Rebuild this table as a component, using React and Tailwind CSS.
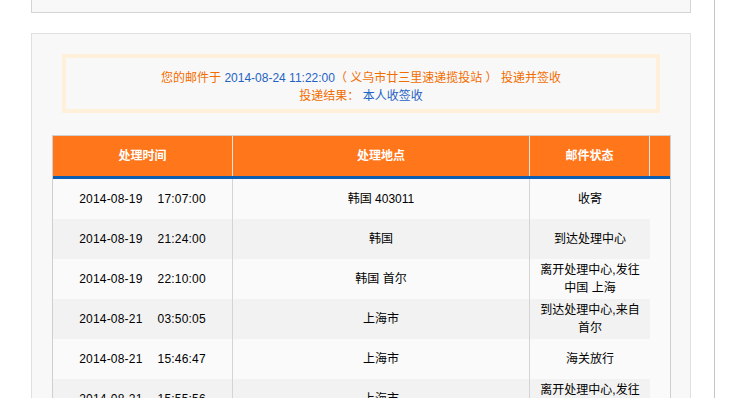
import React from "react";

const rows = [
  ["2014-08-19", "17:07:00", "韩国 403011", "收寄"],
  ["2014-08-19", "21:24:00", "韩国", "到达处理中心"],
  ["2014-08-19", "22:10:00", "韩国 首尔", "离开处理中心,发往中国 上海"],
  ["2014-08-21", "03:50:05", "上海市", "到达处理中心,来自首尔"],
  ["2014-08-21", "15:46:47", "上海市", "海关放行"],
  ["2014-08-21", "15:55:56", "上海市", "离开处理中心,发往义乌市"],
];

const font = { fontFamily: '"Liberation Sans", "Noto Sans CJK SC", sans-serif' };

export default function App() {
  return (
    <div className="w-[750px] h-[398px] overflow-hidden bg-white text-[12px]" style={font}>
      <div className="w-[715px] h-[398px] border-r border-[#c4c4c4]">
        <div className="ml-[31px] w-[660px] h-[13px] bg-[#f8f8f8] border-x border-b border-[#d4d4d4]" />
        <div className="ml-[31px] mt-[20px] w-[660px] h-[400px] bg-[#f8f8f8] border border-[#e0e0e0] pt-[20px]">
          <div className="mx-[30px] h-[59px] border-[4px] border-[#fff0d9] pt-[6px] flex flex-col items-center justify-center leading-[18px] text-[#f26d00]">
            <div>
              您的邮件于 <span className="text-[#1f63c4]">2014-08-24 11:22:00</span>（ 义乌市廿三里速递揽投站 ） 投递并签收
            </div>
            <div>
              投递结果： <span className="text-[#1f63c4]">本人收签收</span>
            </div>
          </div>
          <div className="mx-[20px] mt-[22px] w-[619px] border-l border-r border-t border-[#cfcfcf]">
            <div className="flex h-[40px] bg-[#ff761b] text-white font-bold">
              <div className="w-[180px] border-r border-[#e6e6e6] flex items-center justify-center">处理时间</div>
              <div className="w-[297px] border-r border-[#e6e6e6] flex items-center justify-center">处理地点</div>
              <div className="w-[120px] border-r border-[#e6e6e6] flex items-center justify-center">邮件状态</div>
              <div className="flex-1" />
            </div>
            <div className="h-[3px] bg-[#0b5cb3]" />
            <div className="bg-[#fafafa] text-black">
              {rows.map((r, i) => (
                <div key={i} className="flex">
                  <div className={`flex w-[597px] h-[40px] ${i % 2 === 1 ? "bg-[#f2f2f2]" : "bg-[#fafafa]"}`}>
                    <div className="w-[180px] border-r border-[#d4d4d4] flex items-center justify-center tracking-[0.2px]">
                      <span>{r[0]}</span>
                      <span className="ml-[15px]">{r[1]}</span>
                    </div>
                    <div className="w-[297px] border-r border-[#d4d4d4] flex items-center justify-center">{r[2]}</div>
                    <div className="w-[120px] px-[8px] flex items-center justify-center text-center leading-[18px]">{r[3]}</div>
                  </div>
                </div>
              ))}
            </div>
          </div>
        </div>
      </div>
    </div>
  );
}
